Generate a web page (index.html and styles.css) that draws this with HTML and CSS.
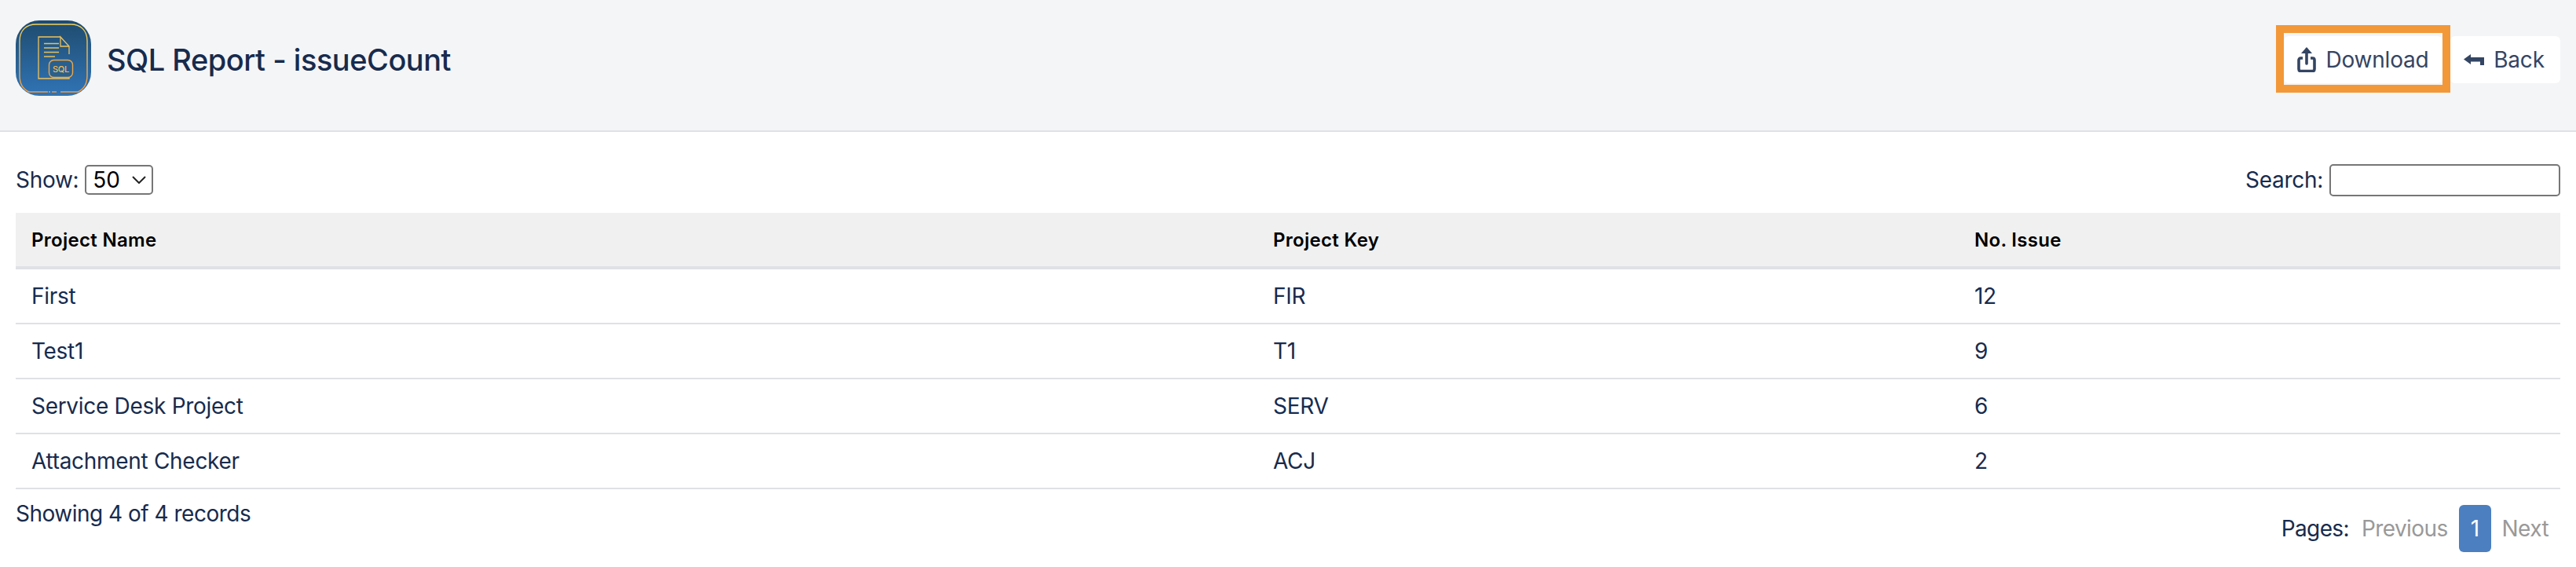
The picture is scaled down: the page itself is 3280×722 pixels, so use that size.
FILE: index.html
```html
<!DOCTYPE html>
<html lang="en">
<head>
  <meta charset="UTF-8" />
  <title>SQL Report - issueCount</title>
  <link rel="stylesheet" href="styles.css">
</head>
<body>
  <header class="page-header">
    <div class="title-group">
      <svg class="logo" viewBox="0 0 96 96">
        <defs>
          <linearGradient id="logo-bg" x1="0" y1="0" x2="0" y2="1">
            <stop offset="0" stop-color="#1f4b6e"/>
            <stop offset="1" stop-color="#3074b6"/>
          </linearGradient>
          <linearGradient id="logo-line" x1="0" y1="0" x2="0" y2="1">
            <stop offset="0" stop-color="#f2d25e"/>
            <stop offset="1" stop-color="#ee9b45"/>
          </linearGradient>
        </defs>
        <rect width="96" height="96" rx="30" fill="url(#logo-bg)"/>
        <path d="M41 91H17C10 88 5 81 5 70V26C5 13 13 5 26 5H70C83 5 91 13 91 26V70C91 81 86 88 79 91H57" fill="none" stroke="url(#logo-line)" stroke-width="1.4"/>
        <path d="M46 91H52" fill="none" stroke="#ee9b45" stroke-width="1.4"/>
        <circle cx="43" cy="91" r="1" fill="#ee9b45"/>
        <path d="M57 21H29V74H68V69M68 43V33L57 21V33H68" fill="none" stroke="#efc25a" stroke-width="1.3"/>
        <path d="M36 29.500H55M36 35H55M36 40.500H55M36 46H50" fill="none" stroke="#e6c25f" stroke-width="1.500"/>
        <rect x="42.500" y="50.500" width="30" height="22" rx="6" fill="#28608f" stroke="#eba94f" stroke-width="1.400"/>
        <text class="logo-text" x="57.500" y="66" text-anchor="middle">SQL</text>
      </svg>
      <h1>SQL Report - issueCount</h1>
    </div>
    <div class="actions">
      <button class="btn btn-download" type="button">
        <svg class="icon-share" viewBox="0 0 24 32">
          <path d="M7 14H4.500C3 14 2 15 2 16.500V28C2 29.500 3 30.500 4.500 30.500H19.500C21 30.500 22 29.500 22 28V16.500C22 15 21 14 19.500 14H17" fill="none" stroke="#344563" stroke-width="3.600"/>
          <path d="M12 21V3" fill="none" stroke="#344563" stroke-width="3.600" stroke-linecap="round"/>
          <path d="M12 0L19 8H5Z" fill="#344563"/>
        </svg>
        Download
      </button>
      <button class="btn btn-back" type="button">
        <svg class="icon-back" viewBox="0 0 26 16">
          <path d="M0 7.500L9 1V5H26V15H21V10.500H9V14Z" fill="#344563"/>
        </svg>
        Back
      </button>
    </div>
  </header>

  <main class="content">
    <div class="toolbar">
      <label class="field">Show:
        <select class="page-size">
          <option>50</option>
        </select>
      </label>
      <label class="field">Search:
        <input class="search" type="text">
      </label>
    </div>

    <table class="report">
      <thead>
        <tr>
          <th class="col-name">Project Name</th>
          <th class="col-key">Project Key</th>
          <th>No. Issue</th>
        </tr>
      </thead>
      <tbody>
        <tr><td>First</td><td>FIR</td><td>12</td></tr>
        <tr><td>Test1</td><td>T1</td><td>9</td></tr>
        <tr><td>Service Desk Project</td><td>SERV</td><td>6</td></tr>
        <tr><td>Attachment Checker</td><td>ACJ</td><td>2</td></tr>
      </tbody>
    </table>

    <div class="table-footer">
      <div class="count">Showing 4 of 4 records</div>
      <div class="pager">
        <span class="pager-label">Pages:</span>
        <span class="disabled">Previous</span>
        <span class="current">1</span>
        <span class="disabled">Next</span>
      </div>
    </div>
  </main>
</body>
</html>
```

FILE: styles.css
```css
body {
  margin: 0;
  background: white;
  color: #172b4d;
  font-family: Inter, 'Noto Sans', sans-serif;
  font-size: 28px;
  letter-spacing: -0.3px;
}

.page-header {
  display: flex;
  justify-content: space-between;
  padding: 0 20px;
  box-sizing: border-box;
  height: 168px;
  background: #f4f5f7;
  border-bottom: 2px solid #dfe1e6;
}

.title-group {
  display: flex;
  align-items: flex-start;
  gap: 20px;
  padding-top: 26px;
}

.logo {
  width: 96px;
  height: 96px;
}

.logo-text {
  fill: #eeb95a;
  font-family: Inter, sans-serif;
  font-size: 11px;
  font-weight: 500;
}

h1 {
  margin: 0;
  padding-top: 26px;
  font-size: 38px;
  font-weight: 500;
  letter-spacing: -0.5px;
  line-height: 48px;
}

.actions {
  display: flex;
  padding-top: 46px;
}

.btn {
  display: flex;
  align-items: center;
  height: 60px;
  border: none;
  background: white;
  color: #344563;
  font-family: inherit;
  font-size: 28px;
  letter-spacing: -0.2px;
  padding: 0;
}

.btn-download {
  position: relative;
  width: 202px;
  justify-content: center;
  gap: 12px;
  border-radius: 6px;
  margin-right: 10px;
}

/* orange highlight drawn over the button */
.btn-download::after {
  content: "";
  position: absolute;
  left: -10px;
  right: -10px;
  top: -14px;
  bottom: -12px;
  border: 10px solid #f29838;
}

.btn-back {
  width: 140px;
  justify-content: center;
  gap: 12px;
  border-radius: 6px;
  padding-right: 3px;
}

.icon-share {
  width: 24px;
  height: 32px;
}

.icon-back {
  width: 26px;
  height: 16px;
}

.content {
  padding: 0 20px;
}

.toolbar {
  display: flex;
  justify-content: space-between;
  align-items: center;
  margin-top: 40px;
  height: 42px;
}

.field {
  display: flex;
  align-items: center;
  gap: 8px;
}

.page-size {
  appearance: none;
  width: 87px;
  height: 38px;
  padding: 0 0 0 8px;
  border: 2px solid #767676;
  border-radius: 5px;
  color: black;
  font-family: inherit;
  font-size: 28px;
  background: white url("data:image/svg+xml,%3Csvg xmlns='http://www.w3.org/2000/svg' width='18' height='10'%3E%3Cpath d='M1 1L9 9L17 1' fill='none' stroke='%23222' stroke-width='2'/%3E%3C/svg%3E") no-repeat right 7px center;
}

.search {
  width: 294px;
  height: 41px;
  box-sizing: border-box;
  border: 2px solid #767676;
  border-radius: 5px;
  background: white;
}

.report {
  width: 100%;
  margin-top: 21px;
  border-collapse: collapse;
  table-layout: fixed;
}

.col-name {
  width: 1541px;
}

.col-key {
  width: 853px;
}

.report th {
  height: 68px;
  padding: 0 20px;
  background: #f0f0f0;
  border-bottom: 4px solid #dfe1e6;
  color: black;
  font-size: 24px;
  font-weight: 600;
  letter-spacing: 0.3px;
  text-align: left;
}

.report td {
  height: 68px;
  padding: 0 20px;
  border-bottom: 2px solid #dfe1e6;
}

.table-footer {
  display: flex;
  justify-content: space-between;
  align-items: flex-start;
}

.count {
  padding-top: 14px;
  letter-spacing: -0.5px;
}

.pager {
  display: flex;
  align-items: center;
  gap: 14px;
  margin-top: 20px;
  padding-right: 15px;
  letter-spacing: -0.6px;
}

.pager-label {
  margin-right: 2px;
}

.disabled {
  color: #999;
}

.current {
  display: flex;
  justify-content: center;
  align-items: center;
  width: 41px;
  height: 60px;
  border-radius: 6px;
  background: #4c7fc0;
  color: white;
}
```
